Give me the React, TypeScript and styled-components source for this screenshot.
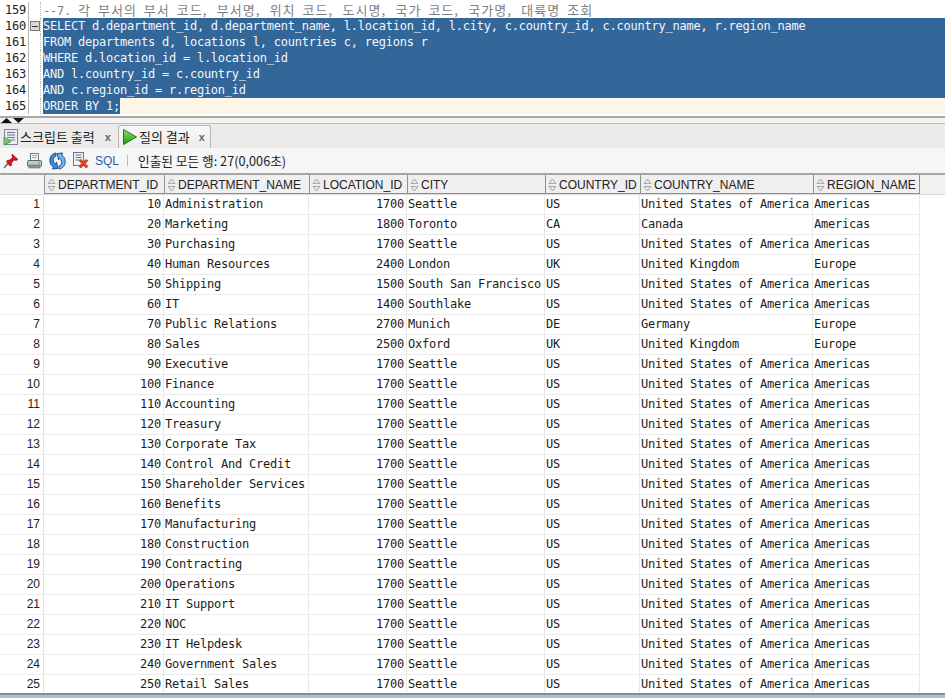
import React from "react";
import styled, { createGlobalStyle } from "styled-components";

const Global = createGlobalStyle`
  html, body { margin: 0; padding: 0; background: #fff; overflow: hidden; }
  #root { width: 945px; height: 698px; }
`;

const MONO = `"DejaVu Sans Mono", "Noto Sans CJK KR", monospace`;
const SANS = `"Liberation Sans", "Noto Sans CJK KR", sans-serif`;
const KR = `"Noto Sans CJK KR", "Liberation Sans", sans-serif`;

const Page = styled.div`
  width: 945px; height: 698px; display: flex; flex-direction: column; overflow: hidden; background: #fff;
`;
const Editor = styled.div`
  height: 116px; padding-top: 2px; box-sizing: border-box; display: flex; flex-direction: column; flex: none;
`;
const Line = styled.div`
  display: flex; height: 16px; flex: none;
`;
const LineNo = styled.div`
  width: 29px; box-sizing: border-box; padding-right: 2px; text-align: right; flex: none;
  font: 12px/16px ${MONO}; letter-spacing: -0.23px; color: #222;
  border-right: 1px solid #b5b5b5; 
`;
const Fold = styled.div`
  width: 12px; flex: none; display: flex; align-items: center; justify-content: flex-start;
  border-right: 1px dotted #b8b8b8; box-sizing: border-box; margin-right: 2px;
`;
const FoldBox = styled.div`
  width: 8px; height: 8px; margin-left: 1px; background: #d8d8d8; border: 1px solid #777; display: flex; align-items: center; justify-content: center;
  &::after { content: ""; width: 6px; height: 1px; background: #333; }
`;
const Code = styled.div<{ $current?: boolean }>`
  flex: 1; min-width: 0; white-space: pre; font: 12px/16px ${MONO}; letter-spacing: -0.23px;
  background: ${(p) => (p.$current ? "#fdf6e6" : "transparent")};
`;
const Comment = styled.span`color: #7f7f7f;`;
const CommentKr = styled.span`
  font-family: ${KR}; letter-spacing: 1px; word-spacing: 3.1px; font-size: 13px; color: #7f7f7f;
`;
const Comma = styled.span`padding-right: 2.4px;`;
const Sel = styled.span<{ $full?: boolean }>`
  display: ${(p) => (p.$full ? "block" : "inline-block")};
  background: #336699; color: #f2f6fa; height: 16px;
`;
const Splitter = styled.div`
  height: 7px; flex: none; border-top: 2px solid #a9a9a9; box-sizing: border-box; display: flex; align-items: flex-start; gap: 1px; padding-left: 1px; background: #f4f4f4;
  padding-top: 0;
`;
const TabStrip = styled.div`
  height: 25px; flex: none; display: flex; align-items: flex-end; background: #ecebe9; border-top: 1px solid #bdbdbd; box-sizing: border-box;
`;
const Tab = styled.div<{ $active?: boolean }>`
  height: 23px; box-sizing: border-box; display: flex; align-items: center; gap: 1px;
  font: 13px/16px ${KR}; color: #222;
  ${(p) => (p.$active
    ? "width: 93px; padding-left: 3px; background: linear-gradient(#f8f8f8,#ececea); border: 1px solid #b4b4b4; border-bottom: none; border-radius: 3px 3px 0 0;"
    : "width: 118px; padding-left: 3px;")}
`;
const TabClose = styled.span<{ $gap: number }>`
  font: bold 11px/14px ${SANS}; color: #666; margin-left: ${(p) => p.$gap}px;
`;
const Toolbar = styled.div`
  height: 27px; flex: none; box-sizing: border-box; padding-left: 3px; display: flex; align-items: center; background: #f6f6f6;
  border-bottom: 2px solid #a6a6a6; 
`;
const ToolIcon = styled.span`
  width: 23px; height: 18px; display: flex; align-items: center; justify-content: flex-start; flex: none;
`;
const SqlLabel = styled.span`
  font: 12px/16px ${SANS}; color: #1f5fae; margin-right: 8px;
`;
const Sep = styled.span`
  width: 1px; height: 11px; background: #bbb; margin-right: 10px;
`;
const Status = styled.span`
  font: 12.7px/16px ${KR}; color: #222;
`;
const Grid = styled.div`
  flex: 1; min-height: 0; overflow: hidden; display: flex; flex-direction: column; background: #fff;
`;
const COLS = "44px 120px 145px 98px 138px 95px 173px 107px";
const HeadRow = styled.div`
  display: grid; grid-template-columns: ${COLS}; width: 945px; height: 20px; flex: none; background: #f1f1f1; box-sizing: border-box;
  border-bottom: 1px solid #dcdcdc;
`;
const HeadCorner = styled.div`background: #f5f5f5;`;
const HeadCell = styled.div`
  display: flex; align-items: center; gap: 2px; padding: 2px 0 0 2px; box-sizing: border-box; overflow: hidden; white-space: nowrap;
  background: #efefef; border-left: 1px solid #8f8f8f; border-bottom: 1px solid #8f8f8f;
  font: 12px/16px ${SANS}; color: #222;
  &:last-child { border-right: 1px solid #8f8f8f; }
`;
const Row = styled.div`
  display: grid; grid-template-columns: ${COLS}; width: 920px; height: 20px; flex: none; box-sizing: border-box;
`;
const Num = styled.div`
  font: 12px/19px ${SANS}; color: #222; text-align: right; padding-right: 3px; border-right: 1px solid #e4e4e4; border-bottom: 1px solid #eee; background: #fff; box-sizing: border-box;
`;
const Cell = styled.div<{ $right?: boolean }>`
  font: 12px/19px ${MONO}; letter-spacing: -0.23px; color: #1c1c1c; white-space: pre; overflow: hidden;
  padding: ${(p) => (p.$right ? "0 2px 0 0" : "0 0 0 1px")}; text-align: ${(p) => (p.$right ? "right" : "left")};
  border-right: 1px solid #e8e8e8; border-bottom: 1px solid #ececec; box-sizing: border-box;
`;
const BottomBar = styled.div`
  height: 5px; flex: none; background: #a9bfd8; border-top: 2px solid #8c8c8c; box-sizing: border-box;
`;

const SortIcon = () => (
  <svg width="9" height="14" viewBox="0 0 9 14" style={{ flex: "none" }}>
    <path d="M4.5 1 L8 5.5 H1 Z M4.5 13 L1 8.5 H8 Z" fill="#e8e8e8" stroke="#a8a8a8" strokeWidth="1" />
  </svg>
);
const ArrowUp = () => (<svg width="11" height="5" viewBox="0 0 11 5"><path d="M5.5 0 L11 5 H0 Z" fill="#111" /></svg>);
const ArrowDown = () => (<svg width="11" height="5" viewBox="0 0 11 5"><path d="M0 0 H11 L5.5 5 Z" fill="#111" /></svg>);
const ScriptIcon = () => (
  <svg width="16" height="18" viewBox="0 0 16 18" style={{ flex: "none" }}>
    <rect x="1.5" y="1.5" width="13" height="15" fill="#e9ecf2" stroke="#7b86a0" />
    <path d="M4 4.5h8M4 7h8M4 9.500h8M4 12h8" stroke="#6d7894" />
    <path d="M1 9 L8 13.500 L1 17 Z" fill="#7cc46a" stroke="#5a9e4c" />
  </svg>
);
const PlayIcon = () => (
  <svg width="16" height="18" viewBox="0 0 16 18" style={{ flex: "none" }}>
    <defs><linearGradient id="pl" x1="0" y1="0" x2="0" y2="1"><stop offset="0" stopColor="#8fe05a" /><stop offset="1" stopColor="#1f9a1f" /></linearGradient></defs>
    <path d="M1.500 1.500 L14.500 9 L1.500 16.500 Z" fill="url(#pl)" stroke="#27701f" />
  </svg>
);
const PinIcon = () => (
  <svg width="16" height="16" viewBox="0 0 16 16">
    <path d="M9 1 L15 6.500 L13 7.500 L11 7 L8.500 10 L8.500 12.500 L7 13 L3.500 9 L4 7.500 L6.500 7 L9.500 4.500 L9 2.500 Z" fill="#d8141c" stroke="#8f0c10" strokeWidth="0.6" />
    <path d="M5 10.500 L1 15" stroke="#5a5a5a" strokeWidth="1.300" />
  </svg>
);
const PrintIcon = () => (
  <svg width="17" height="16" viewBox="0 0 17 16">
    <rect x="4.500" y="0.500" width="8" height="7" fill="#f4f6f8" stroke="#6f7a8a" />
    <path d="M6 2.500h5M6 4.500h5" stroke="#9aa4b2" />
    <rect x="1.500" y="7.500" width="14" height="6" rx="1" fill="#c3c7cd" stroke="#5f6670" />
    <rect x="3" y="12" width="11" height="3" fill="#8d939c" stroke="#5f6670" strokeWidth="0.6" />
    <rect x="12" y="9" width="2" height="1.500" fill="#5fbf5f" />
  </svg>
);
const RefreshIcon = () => (
  <svg width="17" height="18" viewBox="0 0 17 18">
    <path d="M7 1 L7 4 C5 4.500 4 6.500 4.500 9 C4.800 10.500 5.500 11.500 6.500 12 L7.500 10 L9 16.500 L3.500 17 L4.500 15 C2 13.500 .8 11 .8 8.500 C.8 4.500 3 1.500 7 1 Z" fill="#3d8ad6" stroke="#16488c" strokeWidth="0.9" />
    <path d="M10 17 L10 14 C12 13.500 13 11.500 12.500 9 C12.200 7.500 11.500 6.500 10.500 6 L9.500 8 L8 1.500 L13.500 1 L12.500 3 C15 4.500 16.200 7 16.200 9.500 C16.200 13.500 14 16.500 10 17 Z" fill="#74b7ee" stroke="#16488c" strokeWidth="0.9" />
  </svg>
);
const DeleteIcon = () => (
  <svg width="17" height="17" viewBox="0 0 17 17">
    <rect x="1.500" y="0.500" width="10" height="13" fill="#eef1f6" stroke="#6d7894" />
    <path d="M3.500 3h6M3.500 5.500h6M3.500 8h4" stroke="#6d7894" />
    <path d="M7 8.500 L9 7.500 L11.500 9.800 L14 7.500 L16 8.500 L13.300 11.500 L16 14.500 L14 16 L11.500 13.300 L9 16 L7 14.500 L9.700 11.500 Z" fill="#e2431c" stroke="#a82a0e" strokeWidth="0.6" />
  </svg>
);

const HEAD = ["DEPARTMENT_ID", "DEPARTMENT_NAME", "LOCATION_ID", "CITY", "COUNTRY_ID", "COUNTRY_NAME", "REGION_NAME"];
const US = ["1700", "Seattle", "US", "United States of America", "Americas"];
const raw: [string, string, string[]][] = [
  ["10", "Administration", US],
  ["20", "Marketing", ["1800", "Toronto", "CA", "Canada", "Americas"]],
  ["30", "Purchasing", US],
  ["40", "Human Resources", ["2400", "London", "UK", "United Kingdom", "Europe"]],
  ["50", "Shipping", ["1500", "South San Francisco", "US", "United States of America", "Americas"]],
  ["60", "IT", ["1400", "Southlake", "US", "United States of America", "Americas"]],
  ["70", "Public Relations", ["2700", "Munich", "DE", "Germany", "Europe"]],
  ["80", "Sales", ["2500", "Oxford", "UK", "United Kingdom", "Europe"]],
  ["90", "Executive", US],
  ["100", "Finance", US],
  ["110", "Accounting", US],
  ["120", "Treasury", US],
  ["130", "Corporate Tax", US],
  ["140", "Control And Credit", US],
  ["150", "Shareholder Services", US],
  ["160", "Benefits", US],
  ["170", "Manufacturing", US],
  ["180", "Construction", US],
  ["190", "Contracting", US],
  ["200", "Operations", US],
  ["210", "IT Support", US],
  ["220", "NOC", US],
  ["230", "IT Helpdesk", US],
  ["240", "Government Sales", US],
  ["250", "Retail Sales", US],
];
const SQL = [
  "SELECT d.department_id, d.department_name, l.location_id, l.city, c.country_id, c.country_name, r.region_name",
  "FROM departments d, locations l, countries c, regions r",
  "WHERE d.location_id = l.location_id",
  "AND l.country_id = c.country_id",
  "AND c.region_id = r.region_id",
];
const COMMENT = "각 부서의 부서 코드, 부서명, 위치 코드, 도시명, 국가 코드, 국가명, 대륙명 조회".split(", ");

export default function App() {
  return (
    <Page>
      <Global />
      <Editor>
        <Line>
          <LineNo>159</LineNo>
          <Fold />
          <Code>
            <Comment>--7. </Comment>
            <CommentKr>
              {COMMENT.map((part, i) => (
                <React.Fragment key={part + i}>
                  {part}
                  {i < COMMENT.length - 1 && <><Comma>,</Comma> </>}
                </React.Fragment>
              ))}
            </CommentKr>
          </Code>
        </Line>
        {SQL.map((s, i) => (
          <Line key={s}>
            <LineNo>{160 + i}</LineNo>
            <Fold>{i === 0 && <FoldBox />}</Fold>
            <Code><Sel $full>{s}</Sel></Code>
          </Line>
        ))}
        <Line>
          <LineNo>165</LineNo>
          <Fold />
          <Code $current><Sel>ORDER BY 1;</Sel></Code>
        </Line>
      </Editor>
      <Splitter><ArrowUp /><ArrowDown /></Splitter>
      <TabStrip>
        <Tab><ScriptIcon />스크립트 출력<TabClose $gap={9}>x</TabClose></Tab>
        <Tab $active><PlayIcon />질의 결과<TabClose $gap={8}>x</TabClose></Tab>
      </TabStrip>
      <Toolbar>
        <ToolIcon><PinIcon /></ToolIcon>
        <ToolIcon><PrintIcon /></ToolIcon>
        <ToolIcon><RefreshIcon /></ToolIcon>
        <ToolIcon><DeleteIcon /></ToolIcon>
        <SqlLabel>SQL</SqlLabel>
        <Sep />
        <Status>인출된 모든 행: 27(0,006초)</Status>
      </Toolbar>
      <Grid>
        <HeadRow>
          <HeadCorner />
          {HEAD.map((h) => (
            <HeadCell key={h}><SortIcon />{h}</HeadCell>
          ))}
        </HeadRow>
        {raw.map(([id, name, r], i) => (
          <Row key={id}>
            <Num>{i + 1}</Num>
            <Cell $right>{id}</Cell>
            <Cell>{name}</Cell>
            <Cell $right>{r[0]}</Cell>
            <Cell>{r[1]}</Cell>
            <Cell>{r[2]}</Cell>
            <Cell>{r[3]}</Cell>
            <Cell>{r[4]}</Cell>
          </Row>
        ))}
      </Grid>
      <BottomBar />
    </Page>
  );
}
